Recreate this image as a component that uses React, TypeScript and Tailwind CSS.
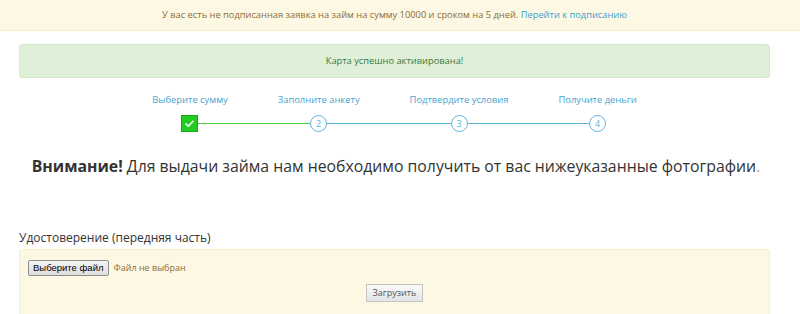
import React from 'react';

const steps = [
  { label: 'Выберите сумму', done: true },
  { label: 'Заполните анкету', done: false },
  { label: 'Подтвердите условия', done: false },
  { label: 'Получите деньги', done: false },
];

const font = { fontFamily: '"Open Sans", "Noto Sans", sans-serif' };

const App: React.FC = () => {
  return (
    <div className="min-h-[314px] bg-white text-[#333]" style={font}>
      <div className="h-[31px] bg-[#fcf8e3] border-b border-[#faebcc] pr-[11px] flex items-center justify-center text-[9.3px] text-[#8a6d3b]">
        <span>
          У вас есть не подписанная заявка на займ на сумму 10000 и сроком на 5 дней.{' '}
          <a className="text-[#3a9fd0]">Перейти к подписанию</a>
        </span>
      </div>

      <div className="ml-[19px] mr-[30px]">
        <div className="mt-[13px] h-[34px] rounded-[3px] bg-[#dff0d8] border border-[#d6e9c6] flex items-center justify-center text-[9.3px] text-[#3c763d]">
          Карта успешно активирована!
        </div>

        <div className="mt-[14px] flex justify-center gap-[50px]">
          {steps.map((s, i) => (
            <div key={s.label} className="flex flex-col items-center">
              <div className="text-[9.4px] leading-[16px] text-[#4aa3cf]">{s.label}</div>
              <div className="relative mt-[7px] h-[17px] w-full flex justify-center">
                {i > 0 && (
                  <div
                    className={`absolute top-[8px] left-[-25px] right-1/2 h-px ${i === 1 ? 'bg-[#4cd24c]' : 'bg-[#5cb3dc]'}`}
                  />
                )}
                {i < steps.length - 1 && (
                  <div
                    className={`absolute top-[8px] left-1/2 right-[-25px] h-px ${i === 0 ? 'bg-[#4cd24c]' : 'bg-[#5cb3dc]'}`}
                  />
                )}
                {s.done ? (
                  <div className="relative h-[17px] w-[17px] bg-[#22cc22] border border-[#1aa51a] flex items-center justify-center">
                    <svg width="11" height="9" viewBox="0 0 11 9" fill="none">
                      <path d="M1.5 4.5 L4.3 7.2 L9.5 1.8" stroke="white" strokeWidth="1.6" />
                    </svg>
                  </div>
                ) : (
                  <div className="relative h-[17px] w-[17px] rounded-full bg-white border border-[#5cb3dc] flex items-center justify-center text-[9px] text-[#5cb3dc]">
                    {i + 1}
                  </div>
                )}
              </div>
            </div>
          ))}
        </div>

        <div className="mt-[22px] pl-[3px] text-center text-[15.8px] leading-[24px] text-[#333]">
          <b>Внимание!</b> Для выдачи займа нам необходимо получить от вас нижеуказанные фотографии<span className="text-[#c9a36b]">.</span>
        </div>

        <div className="mt-[51px] text-[12px] leading-[18px] text-[#333]">Удостоверение (передняя часть)</div>

        <div className="mt-[2px] h-[70px] rounded-t-[3px] bg-[#fcf8e3] border border-[#faebcc] pt-[10px] px-[8px]">
          <div className="flex items-center gap-[5px]">
            <div
              className="h-[16px] px-[4px] border border-[#8f8f8f] rounded-[2px] bg-gradient-to-b from-[#f6f6f6] to-[#dddddd] flex items-center text-[9.5px] text-black"
              style={{ fontFamily: '"Liberation Sans", Arial, sans-serif' }}
            >
              Выберите файл
            </div>
            <span className="text-[9px] text-[#8a6d3b]">Файл не выбран</span>
          </div>
          <div className="mt-[8px] flex justify-center">
            <div className="h-[18px] px-[6px] border border-[#c4c4c4] bg-gradient-to-b from-[#fafafa] to-[#e4e4e4] flex items-center text-[9px] text-[#555]">
              Загрузить
            </div>
          </div>
        </div>
      </div>
    </div>
  );
};

export default App;
